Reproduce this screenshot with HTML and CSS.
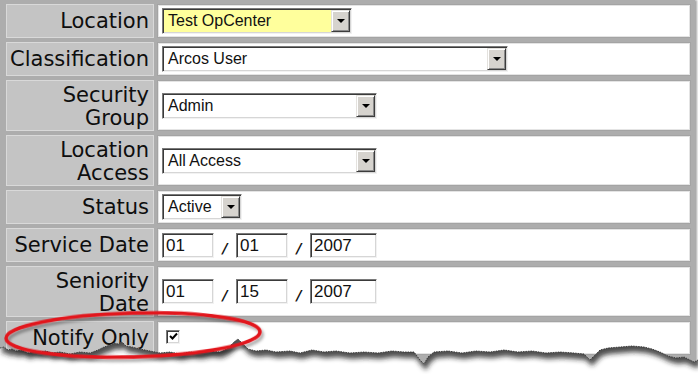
FILE: index.html
```html
<!DOCTYPE html>
<html lang="en">
<head>
    <meta charset="UTF-8">
    <title>User Details</title>
    <link rel="stylesheet" href="styles.css">
</head>
<body>
    <div class="sheet">
        <div class="form-grid">
            <div class="label">Location</div>
            <div class="value">
                <div class="select highlight w-location"><span class="select-text">Test OpCenter</span><span class="select-btn"><i class="arrow"></i></span></div>
            </div>

            <div class="label">Classification</div>
            <div class="value">
                <div class="select w-class"><span class="select-text">Arcos User</span><span class="select-btn"><i class="arrow"></i></span></div>
            </div>

            <div class="label two-line">Security<br>Group</div>
            <div class="value">
                <div class="select w-group"><span class="select-text">Admin</span><span class="select-btn"><i class="arrow"></i></span></div>
            </div>

            <div class="label two-line">Location<br>Access</div>
            <div class="value">
                <div class="select w-group"><span class="select-text">All Access</span><span class="select-btn"><i class="arrow"></i></span></div>
            </div>

            <div class="label">Status</div>
            <div class="value">
                <div class="select w-status"><span class="select-text">Active</span><span class="select-btn"><i class="arrow"></i></span></div>
            </div>

            <div class="label">Service Date</div>
            <div class="value dates">
                <span class="field w-md">01</span>
                <span class="sep">/</span>
                <span class="field w-md">01</span>
                <span class="sep">/</span>
                <span class="field w-year">2007</span>
            </div>

            <div class="label two-line">Seniority<br>Date</div>
            <div class="value dates">
                <span class="field w-md">01</span>
                <span class="sep">/</span>
                <span class="field w-md">15</span>
                <span class="sep">/</span>
                <span class="field w-year">2007</span>
            </div>

            <div class="label">Notify Only</div>
            <div class="value">
                <span class="checkbox">
                    <svg width="9" height="9" viewBox="0 0 9 9"><path d="M1 4 L3.5 6.5 L8 1.5" fill="none" stroke="#000" stroke-width="2"/></svg>
                </span>
            </div>
        </div>

        <!-- torn paper edge along the bottom -->
        <svg class="torn" width="698" height="44" viewBox="0 330 698 44">
            <defs>
                <clipPath id="below">
                    <path d="M0 348 L4 347 L8 350 L12 349 L16 351 L22 350 L28 353 L34 351 L40 352 L46 351 L52 353 L60 352 L70 354 L80 352 L90 353 L98 350 L104 347 L110 345 L114 343 L118 344 L122 342 L126 346 L132 347 L140 349 L150 351 L160 353 L170 352 L180 354 L190 352 L200 353 L210 351 L220 352 L228 348 L234 342 L238 339 L242 343 L248 349 L256 351 L266 350 L276 352 L290 351 L300 353 L312 350 L324 352 L336 351 L350 353 L364 352 L378 353 L392 351 L404 352 L414 352 L420 360 L424 364 L428 357 L434 352 L448 351 L462 353 L476 351 L490 352 L504 350 L518 352 L532 351 L546 353 L560 352 L574 353 L584 354 L590 360 L594 356 L600 350 L608 348 L620 347 L632 346 L644 347 L652 349 L660 352 L668 356 L676 358 L684 357 L690 360 L694 362 L698 360 L698 374 L0 374 Z"/>
                </clipPath>
                <filter id="soft" x="-5%" y="-50%" width="110%" height="200%">
                    <feGaussianBlur stdDeviation="2.5"/>
                </filter>
            </defs>
            <path fill="#fff" d="M0 348 L4 347 L8 350 L12 349 L16 351 L22 350 L28 353 L34 351 L40 352 L46 351 L52 353 L60 352 L70 354 L80 352 L90 353 L98 350 L104 347 L110 345 L114 343 L118 344 L122 342 L126 346 L132 347 L140 349 L150 351 L160 353 L170 352 L180 354 L190 352 L200 353 L210 351 L220 352 L228 348 L234 342 L238 339 L242 343 L248 349 L256 351 L266 350 L276 352 L290 351 L300 353 L312 350 L324 352 L336 351 L350 353 L364 352 L378 353 L392 351 L404 352 L414 352 L420 360 L424 364 L428 357 L434 352 L448 351 L462 353 L476 351 L490 352 L504 350 L518 352 L532 351 L546 353 L560 352 L574 353 L584 354 L590 360 L594 356 L600 350 L608 348 L620 347 L632 346 L644 347 L652 349 L660 352 L668 356 L676 358 L684 357 L690 360 L694 362 L698 360 L698 374 L0 374 Z"/>
            <g clip-path="url(#below)">
                <path fill="#222" fill-opacity="0.8" filter="url(#soft)" transform="translate(2 6)" d="M0 330 L698 330 L698 360 L694 362 L690 360 L684 357 L676 358 L668 356 L660 352 L652 349 L644 347 L632 346 L620 347 L608 348 L600 350 L594 356 L590 360 L584 354 L574 353 L560 352 L546 353 L532 351 L518 352 L504 350 L490 352 L476 351 L462 353 L448 351 L434 352 L428 357 L424 364 L420 360 L414 352 L404 352 L392 351 L378 353 L364 352 L350 353 L336 351 L324 352 L312 350 L300 353 L290 351 L276 352 L266 350 L256 351 L248 349 L242 343 L238 339 L234 342 L228 348 L220 352 L210 351 L200 353 L190 352 L180 354 L170 352 L160 353 L150 351 L140 349 L132 347 L126 346 L122 342 L118 344 L114 343 L110 345 L104 347 L98 350 L90 353 L80 352 L70 354 L60 352 L52 353 L46 351 L40 352 L34 351 L28 353 L22 350 L16 351 L12 349 L8 350 L4 347 L0 348 Z"/>
            </g>
            <path fill="none" stroke="#333" stroke-width="0.9" stroke-dasharray="1.5 1" d="M0 348 L4 347 L8 350 L12 349 L16 351 L22 350 L28 353 L34 351 L40 352 L46 351 L52 353 L60 352 L70 354 L80 352 L90 353 L98 350 L104 347 L110 345 L114 343 L118 344 L122 342 L126 346 L132 347 L140 349 L150 351 L160 353 L170 352 L180 354 L190 352 L200 353 L210 351 L220 352 L228 348 L234 342 L238 339 L242 343 L248 349 L256 351 L266 350 L276 352 L290 351 L300 353 L312 350 L324 352 L336 351 L350 353 L364 352 L378 353 L392 351 L404 352 L414 352 L420 360 L424 364 L428 357 L434 352 L448 351 L462 353 L476 351 L490 352 L504 350 L518 352 L532 351 L546 353 L560 352 L574 353 L584 354 L590 360 L594 356 L600 350 L608 348 L620 347 L632 346 L644 347 L652 349 L660 352 L668 356 L676 358 L684 357 L690 360 L694 362 L698 360"/>
        </svg>

        <!-- red highlight ring round "Notify Only" -->
        <svg class="ring" width="280" height="74" viewBox="0 300 280 74">
            <defs>
                <filter id="ringShadow" x="-10%" y="-30%" width="120%" height="160%">
                    <feDropShadow dx="2" dy="3" stdDeviation="1.5" flood-color="#000" flood-opacity="0.35"/>
                </filter>
            </defs>
            <ellipse cx="133" cy="335" rx="127" ry="22" transform="rotate(-1.5 133 335)" fill="none" stroke="#e2141c" stroke-width="3.5" filter="url(#ringShadow)"/>
        </svg>
    </div>
</body>
</html>
```

FILE: styles.css
```css
* {
    box-sizing: border-box;
}
body {
    margin: 0;
    background: #fff;
    font-family: "Liberation Sans", Arial, sans-serif;
}
.sheet {
    position: relative;
    width: 698px;
    height: 374px;
    overflow: hidden;
}
.form-grid {
    display: grid;
    grid-template-columns: 148px 534px;
    grid-template-rows: 34px 34px 51px 51px 34px 34px 51px 34px;
    column-gap: 3px;
    row-gap: 4px;
    width: 695px;
    padding: 4px 4px 10px 6px;
    background: #adadad;
    box-shadow: 2px 0 2px rgba(0, 0, 0, 0.35);
}
.label {
    display: flex;
    align-items: center;
    justify-content: flex-end;
    padding-right: 4px;
    background: #c4c4c4;
    border: 1px solid #d9d9d9;
    font-family: "DejaVu Sans", Verdana, sans-serif;
    font-size: 21px;
    line-height: 25px;
    color: #0e0e0e;
    text-align: right;
    white-space: nowrap;
}
.label.two-line {
    line-height: 23px;
    padding-top: 2px;
}
.value {
    display: flex;
    align-items: center;
    padding-left: 4px;
    background: #fff;
    border: 1px solid #a4a4a4;
    box-shadow: inset 0 0 0 1px #e4e4e4;
}

/* drop-down boxes */
.select {
    display: flex;
    height: 26px;
    border: 1px solid;
    border-color: #7a7a7a #f2f2f2 #f2f2f2 #7a7a7a;
    box-shadow: inset 1px 1px 0 #3a3a3a, inset -1px -1px 0 #d6d6d6;
    background: #fff;
    padding: 1px;
}
.select.highlight {
    background: #ffff9c;
}
.select-text {
    flex: 1;
    padding-left: 4px;
    font-size: 16px;
    line-height: 22px;
    color: #111;
    white-space: nowrap;
    overflow: hidden;
}
.select-btn {
    display: flex;
    align-items: center;
    justify-content: center;
    width: 19px;
    height: 22px;
    background: #d6d3ce;
    border: 1px solid;
    border-color: #e4e2de #3c3c3c #3c3c3c #e4e2de;
    box-shadow: inset 1px 1px 0 #fff, inset -1px -1px 0 #8a8a8a;
}
.arrow {
    width: 0;
    height: 0;
    border-left: 4px solid transparent;
    border-right: 4px solid transparent;
    border-top: 4px solid #000;
}
.w-location { width: 190px; }
.w-class { width: 346px; }
.w-group { width: 215px; }
.w-status { width: 80px; }

/* date fields */
.dates {
    align-items: center;
}
.field {
    display: block;
    height: 25px;
    padding: 1px 0 0 3px;
    border: 1px solid;
    border-color: #7a7a7a #f2f2f2 #f2f2f2 #7a7a7a;
    box-shadow: inset 1px 1px 0 #3a3a3a, inset -1px -1px 0 #d6d6d6;
    font-family: "Liberation Sans Narrow", "Liberation Sans", Arial, sans-serif;
    font-size: 17px;
    line-height: 21px;
    color: #111;
}
.w-md { width: 52px; }
.w-year { width: 67px; }
.sep {
    width: 22px;
    padding-top: 6px;
    text-align: center;
    font-family: "DejaVu Sans", sans-serif;
    font-size: 14px;
    font-weight: bold;
    font-style: italic;
    line-height: 20px;
    color: #111;
}

.checkbox {
    display: flex;
    align-items: center;
    justify-content: center;
    width: 14px;
    height: 14px;
    margin: -3px 0 0 4px;
    border: 1px solid;
    border-color: #7a7a7a #f2f2f2 #f2f2f2 #7a7a7a;
    box-shadow: inset 1px 1px 0 #3a3a3a, inset -1px -1px 0 #d6d6d6;
    background: #fff;
}

.torn {
    position: absolute;
    left: 0;
    top: 330px;
}
.ring {
    position: absolute;
    left: 0;
    top: 300px;
}
```
